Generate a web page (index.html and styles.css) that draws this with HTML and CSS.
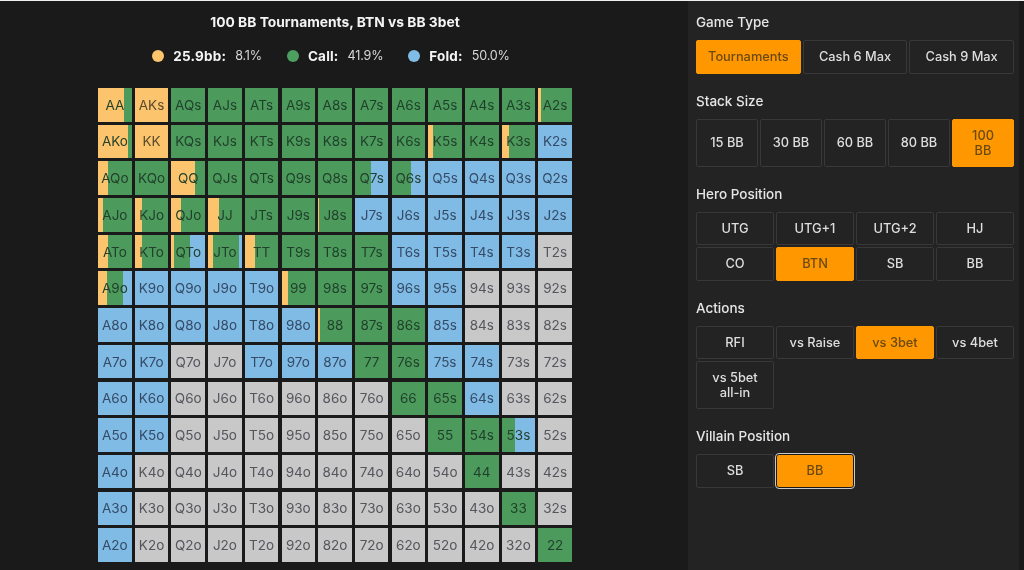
FILE: index.html
```html
<!DOCTYPE html>
<html lang="en">
<head>
  <meta charset="UTF-8">
  <title>Preflop Ranges</title>
  <link rel="stylesheet" href="styles.css">
</head>
<body>
  <div class="page">
    <!-- Range chart -->
    <main class="chart">
      <h1 class="chart-title">100 BB Tournaments, BTN vs BB 3bet</h1>
      <div class="legend">
        <div class="legend-item"><span class="dot dot-raise"></span><b>25.9bb:</b><span>8.1%</span></div>
        <div class="legend-item"><span class="dot dot-call"></span><b>Call:</b><span>41.9%</span></div>
        <div class="legend-item"><span class="dot dot-fold"></span><b>Fold:</b><span>50.0%</span></div>
      </div>
      <div class="grid">
        <div class="cell mix" style="--r:76%;--c:100%">AA</div><div class="cell raise">AKs</div><div class="cell call">AQs</div><div class="cell call">AJs</div><div class="cell call">ATs</div><div class="cell call">A9s</div><div class="cell call">A8s</div><div class="cell call">A7s</div><div class="cell call">A6s</div><div class="cell call">A5s</div><div class="cell call">A4s</div><div class="cell call">A3s</div><div class="cell mix" style="--r:10%;--c:100%">A2s</div>
        <div class="cell mix" style="--r:87%;--c:100%">AKo</div><div class="cell raise">KK</div><div class="cell call">KQs</div><div class="cell call">KJs</div><div class="cell call">KTs</div><div class="cell call">K9s</div><div class="cell call">K8s</div><div class="cell call">K7s</div><div class="cell call">K6s</div><div class="cell mix" style="--r:15%;--c:100%">K5s</div><div class="cell call">K4s</div><div class="cell mix" style="--r:20%;--c:100%">K3s</div><div class="cell fold">K2s</div>
        <div class="cell mix" style="--r:30%;--c:100%">AQo</div><div class="cell call">KQo</div><div class="cell mix" style="--r:72%;--c:100%">QQ</div><div class="cell call">QJs</div><div class="cell call">QTs</div><div class="cell call">Q9s</div><div class="cell call">Q8s</div><div class="cell mix" style="--r:0%;--c:50%">Q7s</div><div class="cell mix" style="--r:0%;--c:58%">Q6s</div><div class="cell fold">Q5s</div><div class="cell fold">Q4s</div><div class="cell fold">Q3s</div><div class="cell fold">Q2s</div>
        <div class="cell mix" style="--r:15%;--c:100%">AJo</div><div class="cell mix" style="--r:20%;--c:100%">KJo</div><div class="cell mix" style="--r:28%;--c:100%">QJo</div><div class="cell mix" style="--r:33%;--c:100%">JJ</div><div class="cell call">JTs</div><div class="cell call">J9s</div><div class="cell mix" style="--r:3%;--c:100%">J8s</div><div class="cell fold">J7s</div><div class="cell fold">J6s</div><div class="cell fold">J5s</div><div class="cell fold">J4s</div><div class="cell fold">J3s</div><div class="cell fold">J2s</div>
        <div class="cell mix" style="--r:30%;--c:100%">ATo</div><div class="cell mix" style="--r:20%;--c:100%">KTo</div><div class="cell mix" style="--r:8%;--c:55%">QTo</div><div class="cell mix" style="--r:14%;--c:90%">JTo</div><div class="cell mix" style="--r:30%;--c:100%">TT</div><div class="cell call">T9s</div><div class="cell call">T8s</div><div class="cell call">T7s</div><div class="cell fold">T6s</div><div class="cell fold">T5s</div><div class="cell fold">T4s</div><div class="cell fold">T3s</div><div class="cell">T2s</div>
        <div class="cell mix" style="--r:27%;--c:75%">A9o</div><div class="cell fold">K9o</div><div class="cell fold">Q9o</div><div class="cell fold">J9o</div><div class="cell fold">T9o</div><div class="cell mix" style="--r:17%;--c:100%">99</div><div class="cell call">98s</div><div class="cell call">97s</div><div class="cell fold">96s</div><div class="cell fold">95s</div><div class="cell">94s</div><div class="cell">93s</div><div class="cell">92s</div>
        <div class="cell fold">A8o</div><div class="cell fold">K8o</div><div class="cell fold">Q8o</div><div class="cell fold">J8o</div><div class="cell fold">T8o</div><div class="cell fold">98o</div><div class="cell mix" style="--r:7%;--c:100%">88</div><div class="cell call">87s</div><div class="cell call">86s</div><div class="cell fold">85s</div><div class="cell">84s</div><div class="cell">83s</div><div class="cell">82s</div>
        <div class="cell fold">A7o</div><div class="cell fold">K7o</div><div class="cell">Q7o</div><div class="cell">J7o</div><div class="cell fold">T7o</div><div class="cell fold">97o</div><div class="cell fold">87o</div><div class="cell call">77</div><div class="cell call">76s</div><div class="cell fold">75s</div><div class="cell fold">74s</div><div class="cell">73s</div><div class="cell">72s</div>
        <div class="cell fold">A6o</div><div class="cell fold">K6o</div><div class="cell">Q6o</div><div class="cell">J6o</div><div class="cell">T6o</div><div class="cell">96o</div><div class="cell">86o</div><div class="cell">76o</div><div class="cell call">66</div><div class="cell call">65s</div><div class="cell fold">64s</div><div class="cell">63s</div><div class="cell">62s</div>
        <div class="cell fold">A5o</div><div class="cell fold">K5o</div><div class="cell">Q5o</div><div class="cell">J5o</div><div class="cell">T5o</div><div class="cell">95o</div><div class="cell">85o</div><div class="cell">75o</div><div class="cell">65o</div><div class="cell call">55</div><div class="cell call">54s</div><div class="cell mix" style="--r:0%;--c:40%">53s</div><div class="cell">52s</div>
        <div class="cell fold">A4o</div><div class="cell">K4o</div><div class="cell">Q4o</div><div class="cell">J4o</div><div class="cell">T4o</div><div class="cell">94o</div><div class="cell">84o</div><div class="cell">74o</div><div class="cell">64o</div><div class="cell">54o</div><div class="cell call">44</div><div class="cell">43s</div><div class="cell">42s</div>
        <div class="cell fold">A3o</div><div class="cell">K3o</div><div class="cell">Q3o</div><div class="cell">J3o</div><div class="cell">T3o</div><div class="cell">93o</div><div class="cell">83o</div><div class="cell">73o</div><div class="cell">63o</div><div class="cell">53o</div><div class="cell">43o</div><div class="cell call">33</div><div class="cell">32s</div>
        <div class="cell fold">A2o</div><div class="cell">K2o</div><div class="cell">Q2o</div><div class="cell">J2o</div><div class="cell">T2o</div><div class="cell">92o</div><div class="cell">82o</div><div class="cell">72o</div><div class="cell">62o</div><div class="cell">52o</div><div class="cell">42o</div><div class="cell">32o</div><div class="cell call">22</div>
      </div>
    </main>

    <!-- Filters -->
    <aside class="filters">
      <h2 class="filter-label">Game Type</h2>
      <div class="btn-row cols-3">
        <button class="btn active">Tournaments</button>
        <button class="btn">Cash 6 Max</button>
        <button class="btn">Cash 9 Max</button>
      </div>

      <h2 class="filter-label">Stack Size</h2>
      <div class="btn-row cols-5">
        <button class="btn tall">15 BB</button>
        <button class="btn tall">30 BB</button>
        <button class="btn tall">60 BB</button>
        <button class="btn tall">80 BB</button>
        <button class="btn tall active">100<br>BB</button>
      </div>

      <h2 class="filter-label">Hero Position</h2>
      <div class="btn-row cols-4">
        <button class="btn">UTG</button>
        <button class="btn">UTG+1</button>
        <button class="btn">UTG+2</button>
        <button class="btn">HJ</button>
        <button class="btn">CO</button>
        <button class="btn active">BTN</button>
        <button class="btn">SB</button>
        <button class="btn">BB</button>
      </div>

      <h2 class="filter-label">Actions</h2>
      <div class="btn-row cols-4">
        <button class="btn">RFI</button>
        <button class="btn">vs Raise</button>
        <button class="btn active">vs 3bet</button>
        <button class="btn">vs 4bet</button>
        <button class="btn tall">vs 5bet<br>all-in</button>
      </div>

      <h2 class="filter-label">Villain Position</h2>
      <div class="btn-row cols-4">
        <button class="btn">SB</button>
        <button class="btn active focused">BB</button>
      </div>
    </aside>
  </div>
</body>
</html>
```

FILE: styles.css
```css
/* General Styles */
body {
  margin: 0;
  background-color: #1a1a1a;
  color: #fff;
  font-family: Inter, "Liberation Sans", sans-serif;
}

.page {
  display: flex;
  height: 570px;
  overflow: hidden;
  border-top: 1px solid #f0f0f0;
  box-sizing: border-box;
  filter: blur(0.35px);
}

/* Chart */
.chart {
  width: 688px;
  flex-shrink: 0;
  display: flex;
  flex-direction: column;
  align-items: center;
  padding-right: 18px;
  box-sizing: border-box;
}

.chart-title {
  margin: 13px 0 0;
  font-size: 13.8px;
  line-height: 16px;
  font-weight: 700;
  color: #f4f4f4;
}

.legend {
  display: flex;
  gap: 25px;
  margin-top: 18px;
  padding-right: 8px;
  font-size: 12.6px;
  line-height: 16px;
  letter-spacing: -0.2px;
  color: #d8d8d8;
}

.legend-item {
  display: flex;
  align-items: center;
  gap: 9px;
}

.legend-item b {
  font-size: 13.5px;
  letter-spacing: 0.2px;
  color: #f4f4f4;
}

.dot {
  width: 12px;
  height: 12px;
  border-radius: 50%;
}

.dot-raise { background: #fcc56d; }
.dot-call { background: #4c9f5e; }
.dot-fold { background: #7fbce6; }

.grid {
  display: grid;
  grid-template-columns: repeat(13, 33.6px);
  grid-auto-rows: 33.6px;
  gap: 3.1px;
  margin-top: 24px;
}

.cell {
  display: flex;
  align-items: center;
  justify-content: center;
  background: #c8c8c8;
  color: #55555c;
  font-size: 13.5px;
}

.cell.call { background: #4c9a5c; color: #1f3f2a; }
.cell.fold { background: #80bbe5; color: #344a66; }
.cell.raise { background: #fcc56d; color: #5a4a30; }

/* --r and --c are where the raise and call parts of the hand end */
.cell.mix {
  background: linear-gradient(to right, #fcc56d var(--r), #4c9a5c var(--r) var(--c), #80bbe5 var(--c));
  color: #23402c;
}

/* Filters */
.filters {
  width: 331px;
  padding: 13px 5px 0 8px;
  box-sizing: border-box;
  background: #232323;
}

.filter-label {
  margin: 0 0 9px;
  font-size: 13.5px;
  line-height: 17px;
  font-weight: 500;
  color: #e6e6e6;
}

.btn-row {
  display: grid;
  gap: 2px;
  margin-bottom: 19px;
}

.cols-3 { grid-template-columns: repeat(3, 1fr); }
.cols-4 { grid-template-columns: repeat(4, 1fr); }
.cols-5 { grid-template-columns: repeat(5, 1fr); }

.btn {
  height: 33.5px;
  padding: 0 4px;
  border: 1px solid #383838;
  border-radius: 2px;
  background: #232323;
  color: #dedede;
  font-family: Inter, "Liberation Sans", sans-serif;
  font-size: 12.8px;
  font-weight: 500;
  line-height: 15px;
}

.btn.tall {
  height: 48px;
}

.btn.active {
  background: #ff9800;
  border-color: #ff9800;
  color: #6b4a12;
}

.btn.focused {
  border-color: #1a1a1a;
  border-radius: 3px;
  outline: 1.5px solid #c8c8c8;
}
```
